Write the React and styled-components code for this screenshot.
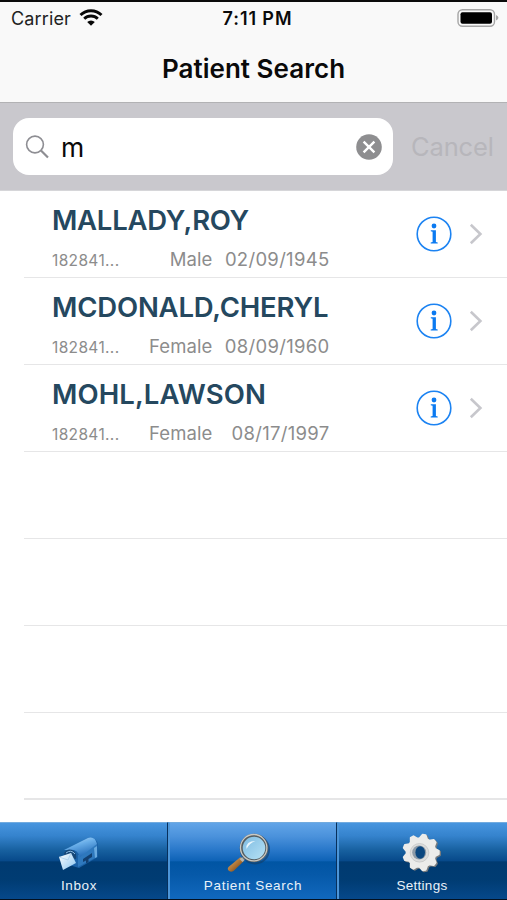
import React, { useState } from "react";
import styled, { createGlobalStyle } from "styled-components";

const GlobalStyle = createGlobalStyle`
    * {
        box-sizing: border-box;
    }
    body {
        margin: 0;
        background-color: #ffffff;
        font-family: Inter, "Liberation Sans", sans-serif;
    }
`

const Screen = styled.div`
    display: flex;
    flex-direction: column;
    width: 507px;
    height: 900px;
    overflow: hidden;
    background-color: #ffffff;
    border-top: 2px solid #0b0b0b;
`

const Header = styled.header`
    height: 101px;
    background-color: #f9f9f9;
    border-bottom: 1px solid #b2b2b4;
`

const StatusBar = styled.div`
    display: grid;
    grid-template-columns: 1fr auto 1fr;
    align-items: center;
    height: 32px;
    padding: 0 8px 0 11px;
    font-size: 18px;
    color: #222222;
`

const Carrier = styled.div`
    display: flex;
    align-items: center;
    gap: 8px;
    letter-spacing: 0.15px;
`

const Clock = styled.div`
    padding-left: 5px;
    font-size: 18px;
    font-weight: 600;
    color: #0a0a0a;
    letter-spacing: 0.9px;
`

const BatteryBox = styled.div`
    display: flex;
    justify-content: flex-end;
`

const Title = styled.h1`
    margin: 0;
    height: 68px;
    line-height: 69px;
    text-align: center;
    font-size: 26px;
    font-weight: 600;
    letter-spacing: 0.03px;
    color: #0a0a0a;
`

const SearchBar = styled.div`
    display: flex;
    align-items: center;
    height: 88px;
    padding: 0 13px;
    background-color: #c9c8cd;
    border-bottom: 1px solid #d6d6d9;
`

const SearchField = styled.label`
    display: flex;
    align-items: center;
    width: 380px;
    height: 57px;
    padding: 0 11px 0 12px;
    border-radius: 16px;
    background-color: #ffffff;
`

const SearchInput = styled.input`
    flex: 1;
    min-width: 0;
    padding: 0;
    margin-left: 11px;
    border: none;
    outline: none;
    background: transparent;
    font-family: inherit;
    font-size: 26.5px;
    color: #0a0a0a;
`

const PlainButton = styled.button`
    display: flex;
    padding: 0;
    border: none;
    background: none;
    font-family: inherit;
    cursor: pointer;
`

const CancelButton = styled(PlainButton)`
    margin-left: 18px;
    font-size: 25.5px;
    letter-spacing: -0.15px;
    color: #b7b6bb;
`

const PatientList = styled.ul`
    flex: 1;
    margin: 0;
    padding: 0 0 0 24px;
    list-style: none;
`

const Row = styled.li`
    display: flex;
    align-items: center;
    height: 87px;
    padding: 0 24px 0 28px;
    border-bottom: ${(props) => (props.$last ? 2 : 1)}px solid #e6e6e7;
`

const Info = styled.div`
    width: 277px;
    height: 100%;
    padding-top: 10px;
`

const Name = styled.div`
    height: 38px;
    line-height: 38px;
    font-size: 27.5px;
    font-weight: 600;
    letter-spacing: ${(props) => props.$spacing}px;
    white-space: nowrap;
    color: #25485f;
`

const Details = styled.div`
    display: grid;
    grid-template-columns: 80px 80.5px 117px;
    align-items: baseline;
    line-height: 40px;
    font-size: 18.5px;
    letter-spacing: 0.1px;
    color: #8c8c8c;
    text-align: right;
`

const RecordId = styled.span`
    text-align: left;
    font-size: 15.5px;
    letter-spacing: 0.35px;
`

const Born = styled.span`
    letter-spacing: 0.3px;
`

const RowActions = styled.div`
    display: flex;
    align-items: center;
    gap: 17px;
    margin-left: auto;
    padding-bottom: 1px;
    padding-top: 1px;
`

const TabBar = styled.nav`
    display: grid;
    grid-template-columns: 168px 169px 170px;
    height: 78px;
    border-bottom: 1px solid #03101f;
`

const Tab = styled.button`
    display: flex;
    flex-direction: column;
    align-items: center;
    padding: 9px ${(props) => props.$inset || 0}px 0 0;
    border: none;
    border-top: 1px solid #72abdf;
    border-left: ${(props) => (props.$first ? "none" : "2px solid #4c95d8")};
    border-right: ${(props) => (props.$end ? "none" : "1px solid #07305c")};
    background: ${(props) => props.$active
        ? "linear-gradient(#62a5e8 0%, #4a91db 18%, #2877c9 36%, #0d62b6 50%, #0055a3 51%, #0659a9 68%, #1168bd 100%)"
        : "linear-gradient(#4795df 0%, #3583cd 17%, #17609f 36%, #07498a 50%, #003a70 51%, #003c73 75%, #06488a 100%)"};
    color: #e9f1f9;
    font-family: "Liberation Sans", sans-serif;
    font-size: 13.5px;
    line-height: 18px;
    letter-spacing: ${(props) => props.$spacing}px;
    white-space: nowrap;
    cursor: pointer;
    svg {
        flex: none;
        margin-bottom: 1px;
    }
`

const patients = [
    { name: "MALLADY,ROY", id: "182841...", sex: "Male", born: "02/09/1945", spacing: -0.25 },
    { name: "MCDONALD,CHERYL", id: "182841...", sex: "Female", born: "08/09/1960", spacing: -0.18 },
    { name: "MOHL,LAWSON", id: "182841...", sex: "Female", born: "08/17/1997", spacing: 0.1 },
]
const emptyRows = [0, 1, 2, 3]

const WifiIcon = () => (
    <svg width="24" height="18" viewBox="0 0 24 18">
        <path d="M1.5 6a15 15 0 0 1 21 0M5.2 9.8a9.8 9.8 0 0 1 13.6 0" fill="none" stroke="#080808" strokeWidth="2.9" />
        <path d="M8.2 13a5.4 5.4 0 0 1 7.6 0L12 16.8z" fill="#080808" />
    </svg>
)

const BatteryIcon = () => (
    <svg width="42" height="19" viewBox="0 0 42 19">
        <rect x="1" y="0.7" width="36.5" height="16.5" rx="4.5" fill="none" stroke="#a6a6a6" strokeWidth="1.4" />
        <rect x="3.5" y="3.2" width="31.5" height="11.6" rx="2" fill="#000000" />
        <path d="M39 6q2.4 1 2.4 2.8T39 11.5z" fill="#a6a6a6" />
    </svg>
)

const GlassIcon = () => (
    <svg width="25" height="24" viewBox="0 0 25 24" fill="none" stroke="#8e8e93">
        <circle cx="10" cy="9.5" r="8.4" strokeWidth="1.6" />
        <path d="M16 15.5l7 7" strokeWidth="2.2" />
    </svg>
)

const ClearIcon = () => (
    <svg width="26" height="26" viewBox="0 0 26 26">
        <circle cx="13" cy="13" r="12.8" fill="#8e8e90" />
        <path d="M7.6 7.6l10.8 10.8M18.4 7.6L7.6 18.4" stroke="#ffffff" strokeWidth="2.4" />
    </svg>
)

const InfoIcon = () => (
    <svg width="36" height="36" viewBox="0 0 36 36">
        <circle cx="18" cy="18" r="16.8" fill="none" stroke="#1c83f2" strokeWidth="1.6" />
        <circle cx="18" cy="10" r="2.4" fill="#0b7af1" />
        <path d="M14.8 14.3h5.1v11.8l1.8.5v.9h-7v-.9l1.9-.5V15.7l-1.8-.5z" fill="#0b7af1" />
    </svg>
)

const Chevron = () => (
    <svg width="14" height="22" viewBox="0 0 14 22">
        <path d="M1.8 1.8L11.4 11L1.8 20.2" fill="none" stroke="#c7c7cc" strokeWidth="2.6" />
    </svg>
)

const MailboxIcon = () => (
    <svg width="44" height="44" viewBox="0 0 44 44">
        <defs>
            <linearGradient id="boxTop" x1="0" y1="0" x2=".45" y2="1">
                <stop offset="0" stopColor="#b7dcfa" />
                <stop offset=".45" stopColor="#69aee9" />
                <stop offset="1" stopColor="#266eb9" />
            </linearGradient>
            <linearGradient id="letter" x1="0" y1="0" x2="1" y2="1">
                <stop offset="0" stopColor="#ffffff" />
                <stop offset="1" stopColor="#8bc5f1" />
            </linearGradient>
        </defs>
        <path d="M7 20L31 7Q39 5 41 12V25L22 36L9 32z" fill="#1b61a7" />
        <path d="M21 23L40 12V25L21 35z" fill="#2e78bd" />
        <path d="M7 18L31 6Q38 4 40 12L23 25Q20 16 12 18z" fill="url(#boxTop)" />
        <path d="M26 27L35 21V25L31.5 27V30L29 31.5V28.5L26 30z" fill="#123f70" />
        <path d="M37 16L40 14V25L38 26z" fill="#68a9df" />
        <path d="M7 21Q11 15 17 19Q20 22 19 27L8 25z" fill="#174777" />
        <path d="M9 21Q14 17 18 22" fill="none" stroke="#8abce7" strokeWidth="1" />
        <path d="M2 25L14 21L19 31L6 38z" fill="url(#letter)" />
        <path d="M2 25L11 28L14 21" fill="none" stroke="#a4c9e7" strokeWidth=".7" />
    </svg>
)

const MagnifierIcon = () => (
    <svg width="44" height="44" viewBox="4.5 -1 44 44" overflow="visible">
        <defs>
            <linearGradient id="wood" x1="0" y1="0" x2="1" y2="1">
                <stop offset=".2" stopColor="#cf9d5c" />
                <stop offset=".55" stopColor="#a96e30" />
                <stop offset=".9" stopColor="#5c3816" />
            </linearGradient>
            <linearGradient id="lens" x1="0" y1="0" x2="1" y2="1">
                <stop offset="0" stopColor="#7bb9e0" />
                <stop offset="1" stopColor="#b9e4f7" />
            </linearGradient>
        </defs>
        <path d="M14 24L17.5 28L7 38Q4 40 1.5 37Q.8 35.5 2 34z" fill="url(#wood)" />
        <path d="M13 26L19 22L20 25L16 29z" fill="#b9b7ae" />
        <circle cx="28.5" cy="16.5" r="14" fill="none" stroke="#143d66" strokeWidth="2" opacity=".6" />
        <circle cx="27.5" cy="15" r="12.8" fill="url(#lens)" stroke="#555d60" strokeWidth="3" />
        <circle cx="27.2" cy="14.7" r="13.2" fill="none" stroke="#c9c9c4" strokeWidth="1.3" />
        <path d="M20 16Q19 8 29 8Q23 10 20 16z" fill="#f4fbff" opacity=".9" />
    </svg>
)

// nine rounded teeth around the hub
const gearPath = Array.from({ length: 36 }, (_, i) => {
    const r = i % 4 < 2 ? 17.8 : 14.4
    const a = (i * 10 - 85) * Math.PI / 180
    return `${i === 0 ? "M" : "L"}${(20 + r * Math.cos(a)).toFixed(2)} ${(20.5 + r * Math.sin(a)).toFixed(2)}`
}).join("") + "z"

const GearIcon = () => (
    <svg width="44" height="44" viewBox="0 0 44 44">
        <path d={gearPath} transform="translate(2.3 1)" fill="#777b7e" stroke="#777b7e" strokeWidth="2" strokeLinejoin="round" />
        <path d={gearPath} transform="translate(1 0)" fill="#ececea" stroke="#ececea" strokeWidth="2" strokeLinejoin="round" />
        <circle cx="19.5" cy="20.8" r="9.3" fill="#dddddc" stroke="#c5c6c7" strokeWidth=".8" />
        <circle cx="19.2" cy="20.5" r="7" fill="#8e9ba7" />
        <ellipse cx="20.2" cy="20.5" rx="4.8" ry="6.2" fill="#0b477f" />
    </svg>
)

const tabs = [
    { label: "Inbox", icon: MailboxIcon, inset: 9, spacing: 0.6 },
    { label: "Patient Search", icon: MagnifierIcon, inset: 0, spacing: 0.7 },
    { label: "Settings", icon: GearIcon, inset: 2, spacing: 0.25 },
]

const PatientSearch = () => {
    const [query, setQuery] = useState("m");
    const [active, setActive] = useState("Patient Search");

    return (
        <>
            <GlobalStyle />
            <Screen>
                <Header>
                    <StatusBar>
                        <Carrier>Carrier <WifiIcon /></Carrier>
                        <Clock>7:11 PM</Clock>
                        <BatteryBox><BatteryIcon /></BatteryBox>
                    </StatusBar>
                    <Title>Patient Search</Title>
                </Header>
                <SearchBar>
                    <SearchField>
                        <GlassIcon />
                        <SearchInput value={query} onChange={(e) => setQuery(e.target.value)} />
                        <PlainButton onClick={() => setQuery("")}><ClearIcon /></PlainButton>
                    </SearchField>
                    <CancelButton>Cancel</CancelButton>
                </SearchBar>
                <PatientList>
                    {patients.map((p) => (
                        <Row key={p.name}>
                            <Info>
                                <Name $spacing={p.spacing}>{p.name}</Name>
                                <Details>
                                    <RecordId>{p.id}</RecordId>
                                    <span>{p.sex}</span>
                                    <Born>{p.born}</Born>
                                </Details>
                            </Info>
                            <RowActions>
                                <InfoIcon />
                                <Chevron />
                            </RowActions>
                        </Row>
                    ))}
                    {emptyRows.map((n) => <Row key={n} $last={n === 3} />)}
                </PatientList>
                <TabBar>
                    {tabs.map(({ label, icon: Icon, inset, spacing }, i) => (
                        <Tab
                            key={label}
                            $first={i === 0}
                            $end={i === 2}
                            $inset={inset}
                            $spacing={spacing}
                            $active={active === label}
                            onClick={() => setActive(label)}
                        >
                            <Icon />
                            {label}
                        </Tab>
                    ))}
                </TabBar>
            </Screen>
        </>
    )
}

export default PatientSearch;
